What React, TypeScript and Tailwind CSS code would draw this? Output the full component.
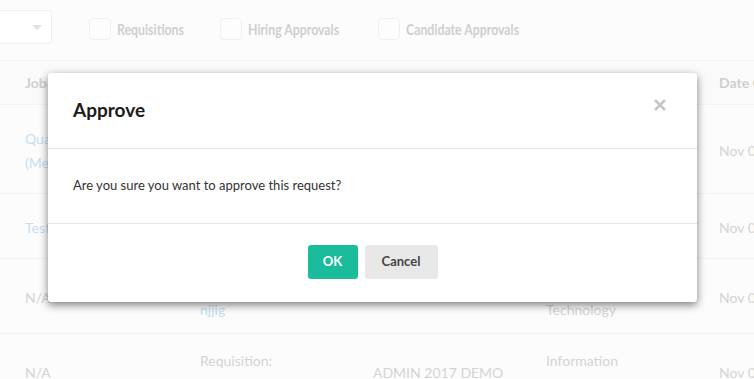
import React from 'react';

const base = { fontFamily: 'Lato, "Noto Sans", sans-serif' };

function Check({ label, w }: { label: string; w: string }) {
  return (
    <label className="flex items-center gap-[6px]">
      <span className="h-[22px] w-[22px] rounded-[4px] border border-[#f0f0f0] bg-[#fdfdfd]" />
      <span className={`${w} whitespace-nowrap text-[15px] font-bold text-[#cfcfcf]`}>
        <span className="inline-block origin-left scale-x-[0.82]">{label}</span>
      </span>
    </label>
  );
}

function Row({ h, cells }: { h: string; cells: React.ReactNode[] }) {
  return (
    <div className={`grid grid-cols-[175px_173px_173px_173px_1fr] items-center border-b border-[#f3f3f3] pl-[25px] pt-[4px] ${h}`}>
      {cells.map((c, i) => (
        <div key={i} className="whitespace-nowrap leading-[24px]">
          {c}
        </div>
      ))}
    </div>
  );
}

const link = 'text-[#c6dff1]';
const muted = 'text-[#d4d4d4]';

export default function App() {
  return (
    <div className="relative h-[379px] w-[754px] overflow-hidden bg-[#fcfcfc] text-[14px]" style={base}>
      {/* page behind */}
      <div className="flex h-[61px] items-start gap-[36px] border-b border-[#f3f3f3] pt-[10px]">
        <div className="relative h-[34px] w-[52px] rounded-r-[4px] border border-l-0 border-[#f0f0f0] bg-white">
          <span className="absolute right-[9px] top-[14px] h-0 w-0 border-x-[5px] border-t-[5px] border-x-transparent border-t-[#e0e0e0]" />
        </div>
        <div className="ml-[1px] mt-[8px] flex items-center gap-[26px]">
          <Check label="Requisitions" w="w-[77px]" />
          <Check label="Hiring Approvals" w="w-[104px]" />
          <Check label="Candidate Approvals" w="w-[127px]" />
        </div>
      </div>
      <div className="grid h-[44px] grid-cols-[175px_173px_173px_173px_1fr] items-center border-b border-[#f3f3f3] bg-[#fafafa] pl-[25px] font-bold text-[#cfcfcf]">
        <div>Job Title</div>
        <div>Request</div>
        <div>Created By</div>
        <div>Department</div>
        <div className="whitespace-nowrap">Date Created</div>
      </div>
      <Row
        h="h-[89px]"
        cells={[
          <span className={link}>Quality Assurance<br />(Mechanical)</span>,
          <span className={link}>Hiring Approval</span>,
          <span className={muted}>ADMIN 2017 DEMO</span>,
          <span className={muted}>Operations</span>,
          <span className={muted}>Nov 09, 2017</span>,
        ]}
      />
      <Row
        h="h-[65px]"
        cells={[
          <span className={link}>Test</span>,
          <span className={link}>Hiring Approval</span>,
          <span className={muted}>ADMIN 2017 DEMO</span>,
          <span className={muted}>Sales</span>,
          <span className={muted}>Nov 08, 2017</span>,
        ]}
      />
      <Row
        h="h-[75px]"
        cells={[
          <span className={muted}>N/A</span>,
          <span><span className={muted}>Requisition:</span><br /><span className={link}>njjig</span></span>,
          <span />,
          <span className={muted}>Information<br />Technology</span>,
          <span className={muted}>Nov 08, 2017</span>,
        ]}
      />
      <Row
        h="h-[75px]"
        cells={[
          <span className={muted}>N/A</span>,
          <span><span className={muted}>Requisition:</span><br /><span className={link}>asdfas</span></span>,
          <span className={muted}>ADMIN 2017 DEMO</span>,
          <span className={muted}>Information<br />Technology</span>,
          <span className={muted}>Nov 08, 2017</span>,
        ]}
      />

      {/* modal */}
      <div className="absolute left-[48px] top-[73px] w-[649px] rounded-[3px] bg-white shadow-[0_3px_9px_rgba(0,0,0,0.5)]">
        <div className="flex h-[76px] items-center justify-between border-b border-[#e5e5e5] px-[25px]">
          <h2 className="text-[19px] font-bold text-[#1c1c1c]">Approve</h2>
          <svg width="14" height="14" viewBox="0 0 14 14" className="mb-[12px] mr-[5px]">
            <path d="M2 2L12 12M12 2L2 12" stroke="#c6c6c6" strokeWidth="2.6" />
          </svg>
        </div>
        <div className="flex h-[75px] items-center border-b border-[#e5e5e5] px-[25px] text-[13px] text-[#333]">
          Are you sure you want to approve this request?
        </div>
        <div className="flex h-[78px] items-center justify-center gap-[7px] pb-[2px]">
          <button className="h-[34px] w-[50px] rounded-[3px] bg-[#1abc9c] text-[13px] font-bold text-white">OK</button>
          <button className="h-[34px] w-[73px] rounded-[3px] bg-[#e8e8e8] text-[13px] font-bold text-[#444]">Cancel</button>
        </div>
      </div>
    </div>
  );
}
